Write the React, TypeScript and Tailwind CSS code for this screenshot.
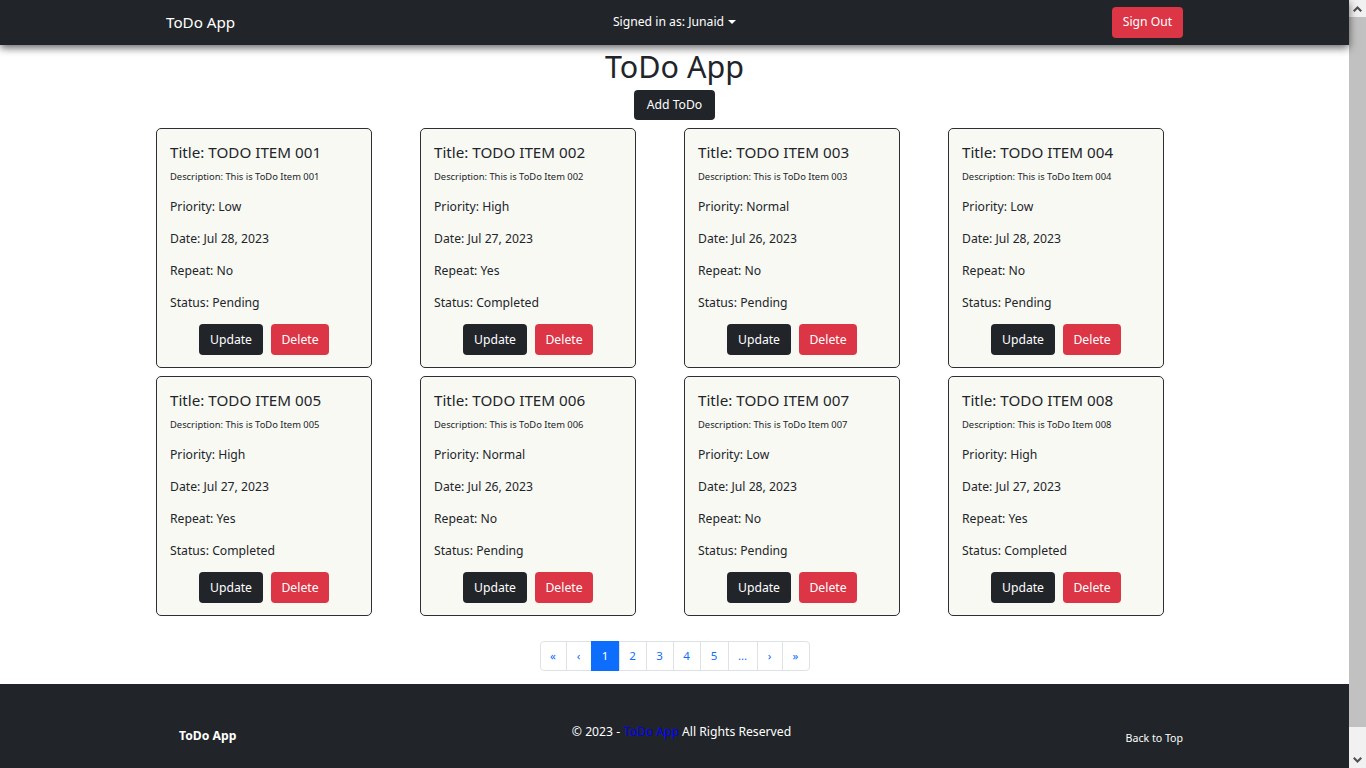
import React from 'react'

type Todo = {
  id: string
  priority: string
  date: string
  repeat: string
  status: string
}

const todos: Todo[] = [
  { id: '001', priority: 'Low', date: 'Jul 28, 2023', repeat: 'No', status: 'Pending' },
  { id: '002', priority: 'High', date: 'Jul 27, 2023', repeat: 'Yes', status: 'Completed' },
  { id: '003', priority: 'Normal', date: 'Jul 26, 2023', repeat: 'No', status: 'Pending' },
  { id: '004', priority: 'Low', date: 'Jul 28, 2023', repeat: 'No', status: 'Pending' },
  { id: '005', priority: 'High', date: 'Jul 27, 2023', repeat: 'Yes', status: 'Completed' },
  { id: '006', priority: 'Normal', date: 'Jul 26, 2023', repeat: 'No', status: 'Pending' },
  { id: '007', priority: 'Low', date: 'Jul 28, 2023', repeat: 'No', status: 'Pending' },
  { id: '008', priority: 'High', date: 'Jul 27, 2023', repeat: 'Yes', status: 'Completed' },
]

const pages = [
  { label: '«', w: 'w-[27px]' },
  { label: '‹', w: 'w-[26px]' },
  { label: '1', w: 'w-[29px]', active: true },
  { label: '2', w: 'w-[28px]' },
  { label: '3', w: 'w-[28px]' },
  { label: '4', w: 'w-[28px]' },
  { label: '5', w: 'w-[29px]' },
  { label: '...', w: 'w-[30px]' },
  { label: '›', w: 'w-[26px]' },
  { label: '»', w: 'w-[28px]' },
]

function TodoCard({ todo }: { todo: Todo }) {
  return (
    <div className="h-[240px] rounded-[5px] border border-[#2b2f33] bg-[#f9f9f4] px-[13px] pt-[14px]">
      <h5 className="mb-[8px] text-[15.2px] leading-[1.2]">Title: TODO ITEM {todo.id}</h5>
      <p className="mb-[13px] text-[9.4px] leading-[1.6]">Description: This is ToDo Item {todo.id}</p>
      <p className="mb-[12.8px] text-[12.2px] leading-[19.2px]">Priority: {todo.priority}</p>
      <p className="mb-[12.8px] text-[12.2px] leading-[19.2px]">Date: {todo.date}</p>
      <p className="mb-[12.8px] text-[12.2px] leading-[19.2px]">Repeat: {todo.repeat}</p>
      <p className="mb-[12px] text-[12.2px] leading-[19.2px]">Status: {todo.status}</p>
      <div className="flex justify-center gap-2">
        <button className="h-[31px] w-[64px] rounded-[4px] bg-[#212529] text-[12.2px] text-white">Update</button>
        <button className="h-[31px] w-[58px] rounded-[4px] bg-[#dc3545] text-[12.2px] text-white">Delete</button>
      </div>
    </div>
  )
}

function Chevron({ down }: { down?: boolean }) {
  return (
    <svg width="9" height="6" viewBox="0 0 9 6" className={down ? 'rotate-180' : ''}>
      <path d="M4.5 0 L9 4.5 L7.5 6 L4.5 3 L1.5 6 L0 4.5 Z" fill="#505050" />
    </svg>
  )
}

function ScrollBar() {
  return (
    <div className="sticky top-0 flex h-[768px] w-[17px] shrink-0 flex-col bg-[#f1f1f1]">
      <div className="flex h-[17px] shrink-0 items-center justify-center">
        <Chevron />
      </div>
      <div className="h-[710px] shrink-0 bg-[#c1c1c1]" />
      <div className="flex-1" />
      <div className="flex h-[17px] shrink-0 items-center justify-center">
        <Chevron down />
      </div>
    </div>
  )
}

export default function App() {
  return (
    <div className="flex items-start bg-white font-['Noto_Sans','Open_Sans',sans-serif] text-[#212529]">
      <div className="min-w-0 flex-1">
        {/* Navbar */}
        <nav className="relative z-10 h-[45px] bg-[#212529] shadow-[0_3px_8px_rgba(0,0,0,0.6)]">
          <div className="mx-auto grid h-full w-[1017px] grid-cols-[1fr_auto_1fr] items-center">
            <span className="text-[15.2px] text-white">ToDo App</span>
            <button className="flex items-center text-[12.2px] text-white">
              Signed in as: Junaid
              <span className="ml-[4px] inline-block h-0 w-0 border-x-[4px] border-t-[4px] border-x-transparent border-t-white" />
            </button>
            <div className="flex justify-end">
              <button className="h-[31px] w-[71px] rounded-[4px] bg-[#dc3545] text-[12.2px] text-white">Sign Out</button>
            </div>
          </div>
        </nav>

        {/* Main */}
        <main className="pt-[2px]">
          <h1 className="text-center text-[30.5px] leading-[38px]">ToDo App</h1>
          <div className="mt-[5px] flex justify-center">
            <button className="h-[30px] w-[81px] rounded-[4px] bg-[#212529] text-[12.2px] text-white">Add ToDo</button>
          </div>

          <div className="mx-auto mt-[8px] w-[1037px]">
            <div className="grid grid-cols-[repeat(4,216px)] gap-x-[48px] gap-y-[8px]">
              {todos.map((t) => (
                <TodoCard key={t.id} todo={t} />
              ))}
            </div>
          </div>

          {/* Pagination */}
          <div className="mt-[25px] mb-[13px] flex justify-center">
            <ul className="flex">
              {pages.map((p, i) => (
                <li
                  key={i}
                  className={`flex h-[30px] items-center justify-center border text-[11.5px] ${p.w} ${
                    p.active ? 'border-[#0d6efd] bg-[#0d6efd] text-white' : 'border-[#dee2e6] bg-white text-[#0d6efd]'
                  } ${i > 0 ? '-ml-px' : ''} ${i === 0 ? 'rounded-l-[4px]' : ''} ${i === pages.length - 1 ? 'rounded-r-[4px]' : ''}`}
                >
                  {p.label}
                </li>
              ))}
            </ul>
          </div>
        </main>

        {/* Footer */}
        <footer className="h-[110px] bg-[#212529] text-white">
          <div className="mx-auto grid h-full w-[1017px] grid-cols-3 items-center pb-[6px]">
            <span className="pl-[13px] text-[12.2px] font-bold">ToDo App</span>
            <p className="mb-[8px] pl-[14px] text-center text-[12.2px] whitespace-nowrap">
              © 2023 - <a className="text-[#0000ff]">ToDo App</a> All Rights Reserved
            </p>
            <a className="mt-[5px] justify-self-end text-[10.6px]">Back to Top</a>
          </div>
        </footer>
      </div>
      <ScrollBar />
    </div>
  )
}
